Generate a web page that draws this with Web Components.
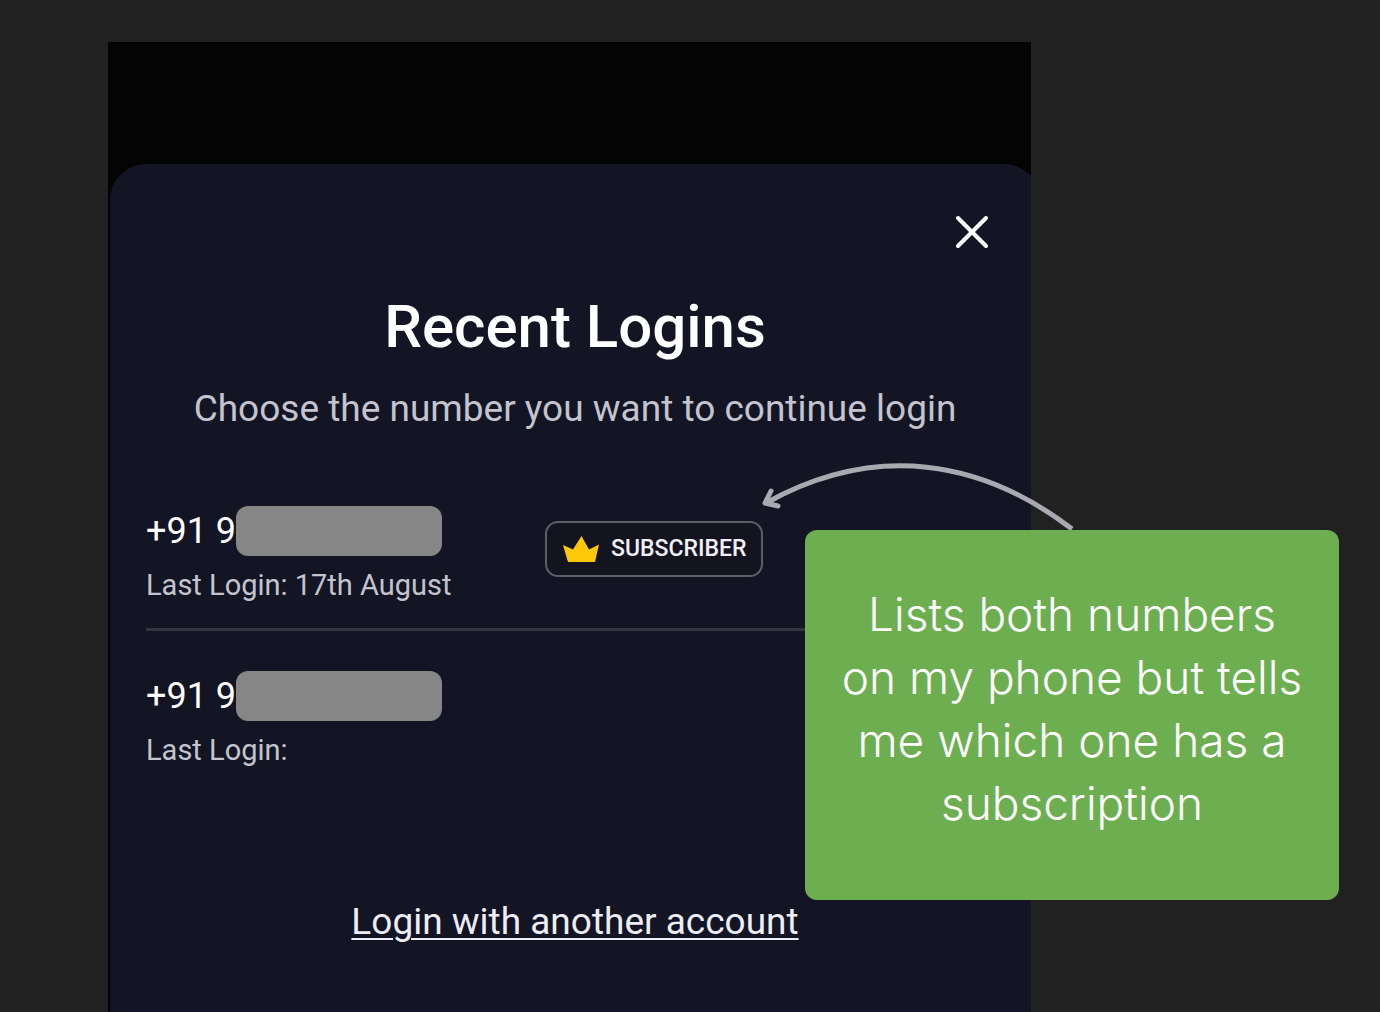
<!DOCTYPE html>
<html lang="en">
<head>
<meta charset="UTF-8">
<meta name="viewport" content="width=device-width, initial-scale=1">
<title>Recent Logins</title>
<style>
    body {
        margin: 0;
        background: #212121;
        font-family: Roboto, "Noto Sans", sans-serif;
    }
</style>
</head>
<body>
<login-board>
    <login-sheet>
        <span slot="title">Recent Logins</span>
        <span slot="subtitle">Choose the number you want to continue login</span>
        <login-row prefix="+91 9" date="17th August">
            <subscriber-badge>SUBSCRIBER</subscriber-badge>
        </login-row>
        <login-row prefix="+91 9"></login-row>
        <span slot="action">Login with another account</span>
    </login-sheet>
    <note-callout slot="note">Lists both numbers on my phone but tells me which one has a subscription</note-callout>
</login-board>

<script>
class LoginBoard extends HTMLElement {
    constructor() {
        super();
        this.attachShadow({ mode: 'open' });
    }
    connectedCallback() {
        this.shadowRoot.innerHTML = `
            <style>
                :host {
                    display: grid;
                    grid-template-columns: 108px minmax(0, 1fr) 349px;
                    position: relative;
                    min-height: 100vh;
                    padding-top: 42px;
                    box-sizing: border-box;
                }
                .screen {
                    grid-column: 2;
                    display: flex;
                    padding: 122px 0 0 2px;
                    background: #040404;
                    overflow: hidden;
                }
                ::slotted([slot="note"]) {
                    position: absolute;
                    top: 530px;
                    right: 41px;
                }
            </style>
            <main class="screen"><slot></slot></main>
            <slot name="note"></slot>
        `;
    }
}
customElements.define('login-board', LoginBoard);

class LoginSheet extends HTMLElement {
    constructor() {
        super();
        this.attachShadow({ mode: 'open' });
    }
    connectedCallback() {
        this.shadowRoot.innerHTML = `
            <style>
                :host {
                    display: flex;
                    flex-direction: column;
                    flex: 1;
                    min-width: 0;
                    margin-right: -9px;
                    background: #131424;
                    border-radius: 36px 36px 0 0;
                }
                .top {
                    display: flex;
                    justify-content: flex-end;
                    padding: 48px 48px 0;
                }
                .close {
                    display: flex;
                    padding: 0;
                    border: 0;
                    background: none;
                    cursor: pointer;
                }
                h1, p {
                    margin: 0;
                    text-align: center;
                }
                h1 {
                    margin-top: 43px;
                    font-size: 60px;
                    line-height: 64px;
                    font-weight: 500;
                    color: #fff;
                }
                p {
                    margin-top: 26px;
                    font-size: 37px;
                    line-height: 48px;
                    color: #c4c4cf;
                }
                .list {
                    display: flex;
                    flex-direction: column;
                    padding: 72px 36px 0;
                }
                .action {
                    align-self: center;
                    margin: 130px 0 64px;
                    font-size: 37px;
                    line-height: 48px;
                    color: #ededf5;
                    text-decoration-thickness: 2px;
                    text-underline-offset: 4px;
                }
            </style>
            <div class="top">
                <button class="close" type="button" aria-label="Close">
                    <svg width="40" height="40" viewBox="0 0 40 40" fill="none" stroke="#fff" stroke-width="4" stroke-linecap="round">
                        <path d="M6 6L34 34M34 6L6 34"/>
                    </svg>
                </button>
            </div>
            <h1><slot name="title"></slot></h1>
            <p><slot name="subtitle"></slot></p>
            <div class="list"><slot></slot></div>
            <a class="action" href="#"><slot name="action"></slot></a>
        `;
    }
}
customElements.define('login-sheet', LoginSheet);

class LoginRow extends HTMLElement {
    constructor() {
        super();
        this.attachShadow({ mode: 'open' });
    }
    connectedCallback() {
        const prefix = this.getAttribute('prefix') || '';
        const date = this.getAttribute('date') || '';

        this.shadowRoot.innerHTML = `
            <style>
                :host {
                    display: grid;
                    grid-template-columns: 399px auto;
                    justify-content: start;
                    align-items: start;
                }
                /* the line between two logins */
                :host(:not(:first-of-type)) {
                    margin-top: 25px;
                    padding-top: 39px;
                    border-top: 3px solid #343542;
                }
                .number {
                    display: flex;
                    align-items: center;
                    font-size: 36px;
                    line-height: 52px;
                    color: #fff;
                }
                .mask {
                    width: 206px;
                    height: 50px;
                    border-radius: 12px;
                    background: #868686;
                }
                .last {
                    margin-top: 10px;
                    font-size: 29px;
                    line-height: 36px;
                    color: #c4c4cf;
                }
                .tag {
                    padding-top: 16px;
                }
            </style>
            <div>
                <div class="number">${prefix}<span class="mask"></span></div>
                <div class="last">Last Login: ${date}</div>
            </div>
            <div class="tag"><slot></slot></div>
        `;
    }
}
customElements.define('login-row', LoginRow);

class SubscriberBadge extends HTMLElement {
    constructor() {
        super();
        this.attachShadow({ mode: 'open' });
    }
    connectedCallback() {
        this.shadowRoot.innerHTML = `
            <style>
                :host {
                    display: flex;
                    align-items: center;
                    gap: 11px;
                    height: 56px;
                    padding: 0 15px;
                    box-sizing: border-box;
                    border: 2px solid #5e5e69;
                    border-radius: 13px;
                    background: #141420;
                    font-size: 23px;
                    line-height: 28px;
                    font-weight: 500;
                    color: #f0f0f8;
                }
            </style>
            <svg width="38" height="28" viewBox="0 0 38 28" fill="#fdc80a" aria-hidden="true">
                <path d="M1 10L11 14.500L19.500 1L27 14.500L37 9.500L33 27H6Z"/>
            </svg>
            <slot></slot>
        `;
    }
}
customElements.define('subscriber-badge', SubscriberBadge);

class NoteCallout extends HTMLElement {
    constructor() {
        super();
        this.attachShadow({ mode: 'open' });
    }
    connectedCallback() {
        this.shadowRoot.innerHTML = `
            <style>
                :host {
                    display: block;
                    width: 534px;
                    padding: 53px 32px 65px;
                    box-sizing: border-box;
                    border-radius: 12px;
                    background: #6daf50;
                    font-family: Inter, Lato, sans-serif;
                    font-size: 46px;
                    line-height: 63px;
                    font-weight: 300;
                    text-align: center;
                    color: #fff;
                }
                .arrow {
                    position: absolute;
                    left: -55px;
                    bottom: 100%;
                }
            </style>
            <svg class="arrow" width="330" height="80" viewBox="750 450 330 80" fill="none" stroke="#a9a9b1" stroke-width="5" aria-hidden="true">
                <path d="M1072 529C982 460 876 442 766 503"/>
                <path d="M771 491L765 503L778 506" stroke-linecap="round" stroke-linejoin="round"/>
            </svg>
            <slot></slot>
        `;
    }
}
customElements.define('note-callout', NoteCallout);
</script>
</body>
</html>
